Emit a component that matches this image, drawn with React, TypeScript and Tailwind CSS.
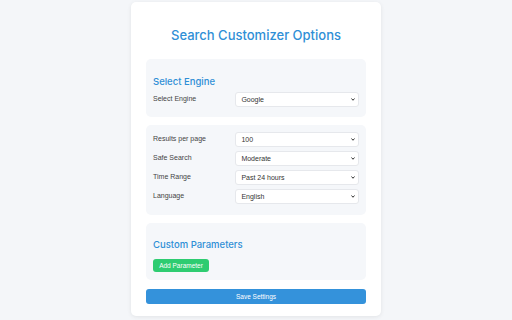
import React from 'react';

const selectRows = [
  { label: 'Results per page', value: '100' },
  { label: 'Safe Search', value: 'Moderate' },
  { label: 'Time Range', value: 'Past 24 hours' },
  { label: 'Language', value: 'English' },
];

function Row({ label, value }: { label: string; value: string }) {
  return (
    <div className="flex items-center mb-[4px]">
      <label className="w-[40%] text-[7px] text-[#444] font-['Liberation_Sans',Arial,sans-serif]">{label}</label>
      <div className="relative w-[60%]">
        <select
          defaultValue={value}
          className="appearance-none block w-full h-[15px] pl-[5px] text-[7px] leading-[13px] text-[#333] bg-white border border-[#e6e8ec] rounded-[3px] font-['Liberation_Sans',Arial,sans-serif]"
        >
          <option>{value}</option>
        </select>
        <svg
          className="absolute right-[4px] top-[6px] w-[4px] h-[3px] pointer-events-none"
          viewBox="0 0 8 6"
          fill="none"
          stroke="#333"
          strokeWidth="2"
        >
          <path d="M1 1l3 3.5L7 1" />
        </svg>
      </div>
    </div>
  );
}

export default function App() {
  return (
    <div className="w-[512px] h-[320px] bg-[#f4f6f9] flex justify-center pt-[2px] overflow-hidden font-['Inter',sans-serif]">
      <div className="w-[250px] h-[314px] bg-white rounded-[5px] shadow-[0_1px_4px_rgba(0,0,0,0.08)] px-[15px] flex flex-col">
        <h1 className="text-center text-[13px] font-medium text-[#2f8fd6] mt-[24px] mb-[15px] leading-[18px]">
          Search Customizer Options
        </h1>

        <div className="bg-[#f5f7fa] rounded-[5px] px-[7px] pt-[17px] pb-[6px]">
          <h2 className="text-[9.5px] font-medium text-[#2f8fd6] leading-[12px] mb-[4px]">Select Engine</h2>
          <Row label="Select Engine" value="Google" />
        </div>

        <div className="bg-[#f5f7fa] rounded-[5px] px-[7px] pt-[7px] pb-[7px] mt-[8px]">
          {selectRows.map((r) => (
            <Row key={r.label} label={r.label} value={r.value} />
          ))}
        </div>

        <div className="bg-[#f5f7fa] rounded-[5px] px-[7px] pt-[16px] pb-[8px] mt-[8px]">
          <h2 className="text-[9.5px] font-medium text-[#2f8fd6] leading-[12px] mb-[8px]">Custom Parameters</h2>
          <button className="block bg-[#2ecc71] text-white text-[6.5px] rounded-[3px] w-[56px] h-[13px] font-['Liberation_Sans',Arial,sans-serif]">
            Add Parameter
          </button>
        </div>

        <button className="block mt-[9px] h-[15px] w-full bg-[#3492db] text-white text-[6.5px] rounded-[3px] font-['Liberation_Sans',Arial,sans-serif]">
          Save Settings
        </button>
      </div>
    </div>
  );
}
